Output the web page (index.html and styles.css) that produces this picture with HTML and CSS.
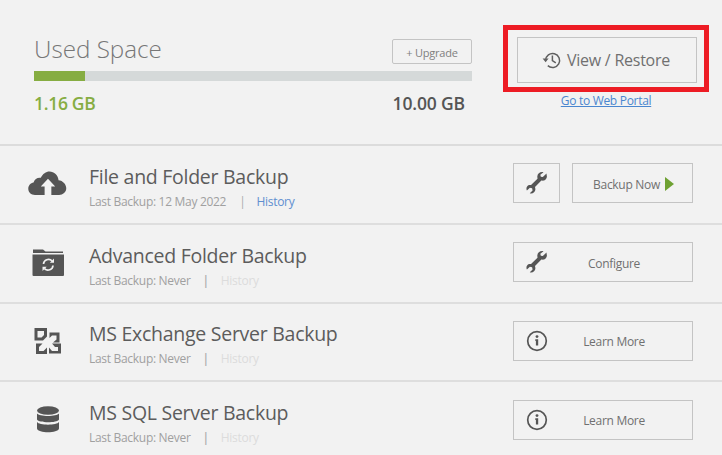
FILE: index.html
```html
<!DOCTYPE html>
<html lang="en">
<head>
<meta charset="utf-8">
<title>Backup</title>
<link rel="stylesheet" href="styles.css">
</head>
<body>
<main class="app">
  <section class="usage">
    <div class="usage-main">
      <div class="usage-head">
        <h1 class="usage-title">Used Space</h1>
        <button class="btn btn-upgrade">+ Upgrade</button>
      </div>
      <div class="bar"><div class="bar-fill" style="width:11.6%"></div></div>
      <div class="usage-values">
        <span class="used">1.16 GB</span>
        <span class="total">10.00 GB</span>
      </div>
    </div>
    <div class="usage-side">
      <div class="restore-wrap">
        <button class="btn btn-restore">
          <svg class="icon-history" viewBox="0 0 20 20" width="20" height="20"><path d="M3.600 10.400a7 7 0 1 1 2.200 5.200" fill="none" stroke="#606060" stroke-width="1.500"/><path d="M0.600 8.600h6l-3 3.600z" fill="#606060"/><path d="M10.400 5.600v5l3.400 2.200" fill="none" stroke="#606060" stroke-width="1.500"/></svg>
          <span>View / Restore</span>
        </button>
        <div class="highlight"></div>
      </div>
      <a class="portal" href="#">Go to Web Portal</a>
    </div>
  </section>

  <section class="row">
    <div class="row-icon">
      <svg viewBox="0 0 40 26" width="39" height="25"><path d="M7 25C3 25 0 22 0 18.500C0 15 2.500 12.500 5.500 12C6.500 8.500 9.500 6.500 13 7C15 3 18.500.5 22 .5C27 .5 31 4.500 31.500 9.500C36 10 39.500 13.500 39.500 18C39.500 22 36 25 32 25H24V16H28L20.500 8L13 16H17V25Z" fill="#555"/></svg>
    </div>
    <div class="row-text">
      <h2 class="row-title">File and Folder Backup</h2>
      <p class="row-meta"><span>Last Backup: 12 May 2022</span><i class="sep sep-thin">|</i><a class="history" href="#">History</a></p>
    </div>
    <div class="row-actions">
      <button class="btn btn-square"><svg class="wrench" viewBox="0 0 22 22" width="22" height="22"><use href="#wrench-shape"/></svg></button>
      <button class="btn btn-backup"><span>Backup Now</span><svg viewBox="0 0 9 14" width="9" height="14"><path d="M0 0l9 7-9 7z" fill="#6ea132"/></svg></button>
    </div>
  </section>

  <section class="row">
    <div class="row-icon">
      <svg viewBox="0 0 34 28" width="34" height="28"><path d="M2 1.500h10l2.500 2H32v1.500H2z" fill="#555"/><path d="M1.500 6.500h31.500v20.500a1 1 0 0 1-1 1H2.500a1 1 0 0 1-1-1z" fill="#555"/><path d="M12.500 16a5 5 0 0 1 8.500-3.200M22 17.500a5 5 0 0 1-8.500 3.200" fill="none" stroke="#f2f2f2" stroke-width="1.700"/><path d="M23 10.500v4.200h-4.200zM11.500 23v-4.200h4.200z" fill="#f2f2f2"/></svg>
    </div>
    <div class="row-text">
      <h2 class="row-title">Advanced Folder Backup</h2>
      <p class="row-meta"><span>Last Backup: Never</span><i class="sep">|</i><a class="history off">History</a></p>
    </div>
    <div class="row-actions">
      <button class="btn btn-wide"><svg class="wrench" viewBox="0 0 22 22" width="22" height="22"><use href="#wrench-shape"/></svg><span>Configure</span></button>
    </div>
  </section>

  <section class="row">
    <div class="row-icon">
      <svg viewBox="0 0 28 28" width="28" height="28"><g fill="#555" fill-rule="evenodd"><path d="M0.500 1H13V9.500L9 13.500H0.500zM3.500 4V10.500H7.500L10 8V4z"/><path d="M15.500 5.500H25.500V15.500H19L22.500 12.500V8.500H18L15.500 11z"/><path d="M2 16.500H8.500L5 20V24H9.500L13 20.500V27H2z"/><path d="M15 20.500L18 24H24V20H21L18 16.500H27V26.500H15z"/></g></svg>
    </div>
    <div class="row-text">
      <h2 class="row-title">MS Exchange Server Backup</h2>
      <p class="row-meta"><span>Last Backup: Never</span><i class="sep">|</i><a class="history off">History</a></p>
    </div>
    <div class="row-actions">
      <button class="btn btn-wide"><svg class="wrench" viewBox="0 0 22 22" width="22" height="22"><use href="#info-shape"/></svg><span>Learn More</span></button>
    </div>
  </section>

  <section class="row">
    <div class="row-icon">
      <svg viewBox="0 0 24 28" width="24" height="28"><ellipse cx="12" cy="4.500" rx="11" ry="4.300" fill="#555"/><path d="M1 7.500c2 3.300 20 3.300 22 0v6c-2 3.700-20 3.700-22 0z" fill="#555"/><path d="M1 16c2 3.500 20 3.500 22 0v6.500c-1 5-21 5-22 0z" fill="#555"/></svg>
    </div>
    <div class="row-text">
      <h2 class="row-title">MS SQL Server Backup</h2>
      <p class="row-meta"><span>Last Backup: Never</span><i class="sep">|</i><a class="history off">History</a></p>
    </div>
    <div class="row-actions">
      <button class="btn btn-wide"><svg class="wrench" viewBox="0 0 22 22" width="22" height="22"><use href="#info-shape"/></svg><span>Learn More</span></button>
    </div>
  </section>
</main>

<svg class="defs" width="0" height="0" aria-hidden="true">
  <symbol id="wrench-shape" viewBox="0 0 22 22"><path d="M20.500 1.500l-3.700 3.500-2-.3-.5-2L17.500.300C14.500-.5 11.500 1.500 11.300 4.500c0 1 .2 1.700.2 2.300L5 13c-.8-.1-2-.2-3 .5C.300 14.800.100 17 .900 18.500l3-2.800 2.200.5.500 2.200-2.800 2.800c2.500.8 5.500-.8 5.600-3.700 0-1-.2-1.800-.4-2.500l6.400-6.400c1 .2 2.300.300 3.300-.3 1.800-1 2.600-3 2-5z" fill="#555"/></symbol>
  <symbol id="info-shape" viewBox="0 0 22 22"><circle cx="11" cy="11" r="9.300" fill="none" stroke="#555" stroke-width="1.700"/><circle cx="11" cy="6.600" r="1.400" fill="#555"/><path d="M9.300 9.300h2.900v6.100h-2.300v-4.500h-.6z" fill="#555"/></symbol>
</svg>
</body>
</html>
```

FILE: styles.css
```css
* { box-sizing: border-box; }
html, body { margin: 0; padding: 0; }
body {
  width: 722px;
  height: 455px;
  overflow: hidden;
  background: #f2f2f2;
  font-family: "Open Sans", "Noto Sans", sans-serif;
}
h1, h2, p { margin: 0; font-weight: 400; }
.defs { position: absolute; }

.btn {
  display: flex;
  align-items: center;
  padding: 0;
  margin: 0;
  background: #f2f2f2;
  border: 1px solid #c4c4c4;
  border-radius: 0;
  font-family: inherit;
  color: #707070;
  cursor: pointer;
}

.usage {
  display: flex;
  height: 146px;
  padding: 37px 25px 0 34px;
  gap: 45px;
  border-bottom: 2px solid #dcdcdc;
}
.usage-main { width: 438px; }
.usage-head {
  display: flex;
  justify-content: space-between;
  align-items: flex-start;
  height: 34px;
}
.usage-title {
  margin-top: -2px;
  font-size: 24.200px;
  line-height: 28px;
  font-weight: 300;
  color: #777;
}
.btn-upgrade {
  justify-content: center;
  width: 80px;
  height: 25px;
  margin-top: 2px;
  padding-top: 2px;
  border-radius: 2px;
  font-size: 11px;
  color: #808080;
  letter-spacing: -0.2px;
}
.bar { height: 10px; background: #d5d9d9; }
.bar-fill { height: 100%; background: #86ad42; }
.usage-values {
  display: flex;
  justify-content: space-between;
  padding: 11px 7px 0 0;
  font-size: 17.500px;
  line-height: 22px;
  font-weight: 600;
  letter-spacing: -0.15px;
}
.used { color: #86ad42; letter-spacing: -0.3px; }
.total { color: #555; }

.usage-side {
  display: flex;
  flex-direction: column;
  align-items: center;
  width: 180px;
}
.restore-wrap { position: relative; width: 100%; }
.btn-restore {
  justify-content: center;
  gap: 5px;
  width: 100%;
  height: 46px;
  padding-right: 2px;
  font-size: 16px;
  letter-spacing: -0.25px;
}
.highlight {
  position: absolute;
  left: -14px;
  right: -12px;
  top: -12px;
  bottom: -9px;
  border: 5px solid #ed1c24;
  pointer-events: none;
}
.portal {
  margin-top: 9.500px;
  padding-right: 2px;
  font-size: 12px;
  line-height: 16px;
  letter-spacing: -0.3px;
  color: #4a86cf;
  text-decoration: underline;
}

.row {
  display: flex;
  align-items: center;
  height: 78.800px;
  padding: 0 29px 2px 0;
  border-bottom: 2px solid #dedede;
}
.row:last-child { border-bottom-color: transparent; }
.row-icon {
  display: flex;
  justify-content: center;
  width: 89px;
  padding: 0 22px 0 28px;
  flex: none;
}
.row-text { flex: 1; padding-top: 7px; }
.row-title {
  font-size: 19.500px;
  line-height: 26px;
  letter-spacing: -0.27px;
  color: #5c5c5c;
}
.row-meta {
  display: flex;
  align-items: center;
  margin-top: 4px;
  font-size: 12px;
  line-height: 16px;
  letter-spacing: -0.3px;
  color: #a0a0a0;
}
.sep {
  font-style: normal;
  font-weight: 600;
  margin: 0 12px;
  color: #aaa;
}
.sep-thin { font-weight: 400; margin: 0 11px 0 13px; }
.history { color: #5f8fd0; text-decoration: none; }
.history.off { color: #dcdcdc; }

.row-actions { display: flex; gap: 12px; }
.btn-square {
  justify-content: center;
  width: 47px;
  height: 40px;
}
.btn-backup {
  justify-content: center;
  gap: 5px;
  width: 121px;
  height: 40px;
  padding-left: 2px;
  padding-top: 2px;
  font-size: 12px;
  letter-spacing: -0.3px;
}
.btn-wide {
  position: relative;
  justify-content: center;
  width: 180px;
  height: 40px;
  padding-top: 2px;
  font-size: 12px;
  letter-spacing: -0.3px;
}
.btn-wide .wrench {
  position: absolute;
  left: 12px;
  top: 8px;
}
.btn-wide span { margin-left: 22px; }
```
